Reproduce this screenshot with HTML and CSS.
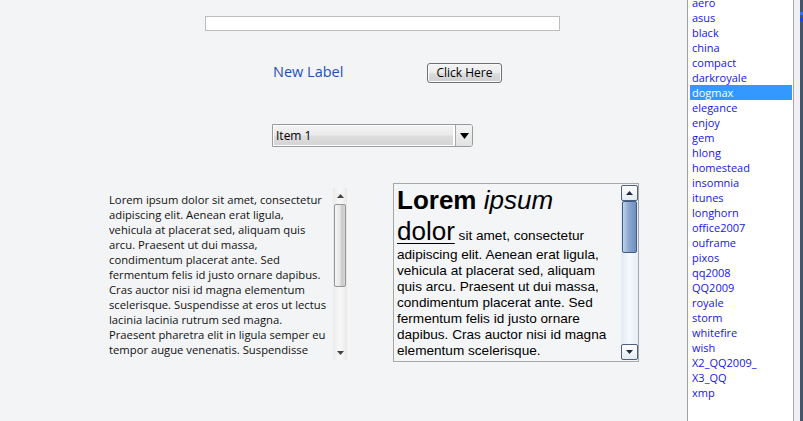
FILE: index.html
```
<!DOCTYPE html>
<html>
<head>
<meta charset="utf-8">
<link rel="stylesheet" href="styles.css">
</head>
<body>
<div class="app">
  <div class="main">
    <div class="field"></div>
    <div class="row1">
      <span class="label">New Label</span>
      <span class="btn">Click Here</span>
    </div>
    <div class="combo">
      <span class="combo-text">Item 1</span>
      <span class="combo-arrow"><svg width="9" height="6" viewBox="0 0 9 6"><path d="M0 0h9L4.5 6z" fill="#000"/></svg></span>
    </div>
    <div class="content">
      <div class="plain">
        <div class="plain-text">Lorem ipsum dolor sit amet, consectetur adipiscing elit. Aenean erat ligula, vehicula at placerat sed, aliquam quis arcu. Praesent ut dui massa, condimentum placerat ante. Sed fermentum felis id justo ornare dapibus. Cras auctor nisi id magna elementum scelerisque. Suspendisse at eros ut lectus lacinia lacinia rutrum sed magna. Praesent pharetra elit in ligula semper eu tempor augue venenatis. Suspendisse</div>
        <div class="sb1">
          <div class="sb1-up"><svg width="7" height="4" viewBox="0 0 7 4"><path d="M0 4h7L3.5 0z" fill="#444"/></svg></div>
          <div class="sb1-thumb"></div>
          <div class="sb1-track"></div>
          <div class="sb1-down"><svg width="7" height="4" viewBox="0 0 7 4"><path d="M0 0h7L3.5 4z" fill="#444"/></svg></div>
        </div>
      </div>
      <div class="rich">
        <div class="rich-text"><span class="big"><b>Lorem</b> <i>ipsum</i> <u>dolor</u></span> sit amet, consectetur adipiscing elit. Aenean erat ligula, vehicula at placerat sed, aliquam quis arcu. Praesent ut dui massa, condimentum placerat ante. Sed fermentum felis id justo ornare dapibus. Cras auctor nisi id magna elementum scelerisque.</div>
        <div class="sb2">
          <div class="sb2-btn"><svg width="7" height="4" viewBox="0 0 7 4"><path d="M0 4h7L3.5 0z" fill="#1c2c44"/></svg></div>
          <div class="sb2-thumb"></div>
          <div class="sb2-track"></div>
          <div class="sb2-btn"><svg width="7" height="4" viewBox="0 0 7 4"><path d="M0 0h7L3.5 4z" fill="#1c2c44"/></svg></div>
        </div>
      </div>
    </div>
  </div>
  <div class="side">
    <ul class="list">
      <li>aero</li><li>asus</li><li>black</li><li>china</li><li>compact</li><li>darkroyale</li><li class="sel">dogmax</li><li>elegance</li><li>enjoy</li><li>gem</li><li>hlong</li><li>homestead</li><li>insomnia</li><li>itunes</li><li>longhorn</li><li>office2007</li><li>ouframe</li><li>pixos</li><li>qq2008</li><li>QQ2009</li><li>royale</li><li>storm</li><li>whitefire</li><li>wish</li><li>X2_QQ2009_</li><li>X3_QQ</li><li>xmp</li>
    </ul>
    <div class="edge"><div class="edge-line"><span class="mark m1"></span><span class="mark m2"></span></div></div>
  </div>
</div>
</body>
</html>
```
FILE: styles.css
```
* { box-sizing: border-box; }
html, body { margin: 0; padding: 0; }
body {
  width: 803px;
  height: 421px;
  overflow: hidden;
  background: #f3f4f6;
  font-family: "Open Sans", "Noto Sans", sans-serif;
}
.app {
  display: flex;
  height: 421px;
}
.main {
  flex: 0 0 687px;
  padding-top: 16px;
  display: flex;
  flex-direction: column;
}
.field {
  margin-left: 205px;
  width: 355px;
  height: 15px;
  background: #fff;
  border: 1px solid #bdbdbd;
}
.row1 {
  margin-top: 32px;
  height: 20px;
  display: flex;
  align-items: center;
  padding-left: 273px;
}
.label {
  width: 154px;
  font-size: 14.5px;
  color: #1f50b8;
  line-height: 20px;
  padding-bottom: 2px;
}
.btn {
  width: 75px;
  height: 20px;
  border: 1px solid #707070;
  border-radius: 3px;
  background: linear-gradient(#f4f4f4 0%, #ececec 48%, #dcdcdc 52%, #cfcfcf 100%);
  box-shadow: inset 0 0 0 1px #fbfbfb;
  font-size: 12px;
  color: #000;
  display: flex;
  align-items: center;
  justify-content: center;
  line-height: 1;
}
.combo {
  margin-top: 41px;
  margin-left: 272px;
  width: 201px;
  height: 23px;
  border: 1px solid #9a9a9a;
  border-radius: 0 3px 3px 0;
  display: flex;
  background: #fff;
}
.combo-text {
  flex: 1;
  margin: 1px 0 1px 1px;
  padding-left: 2px;
  font-size: 12px;
  line-height: 19px;
  color: #000;
  background: linear-gradient(#f2f2f2 0%, #ebebeb 45%, #dddddd 55%, #d4d4d4 100%);
  border-right: 2px solid #fff;
}
.combo-arrow {
  width: 17px;
  border-left: 1px solid #a8a8a8;
  background: linear-gradient(#f4f4f4, #e2e2e2);
  border-radius: 0 2px 2px 0;
  display: flex;
  align-items: center;
  justify-content: center;
}
.content {
  margin-top: 36px;
  display: flex;
  align-items: flex-start;
}
.plain {
  margin-top: 5px;
  margin-left: 109px;
  height: 172px;
  display: flex;
}
.plain-text {
  width: 224px;
  padding-right: 5px;
  height: 172px;
  overflow: hidden;
  padding-top: 4px;
  font-size: 11.25px;
  line-height: 15px;
  color: #111;
}
.sb1 {
  width: 14px;
  height: 172px;
  display: flex;
  flex-direction: column;
  background: linear-gradient(90deg, #eaeaea, #f6f6f6 40%, #f6f6f6 60%, #e8e8e8);
}
.sb1-up, .sb1-down {
  height: 15px;
  display: flex;
  align-items: center;
  justify-content: center;
}
.sb1-thumb {
  margin: 1px 1px 0;
  height: 83px;
  border: 1px solid #959595;
  border-radius: 2px;
  background: linear-gradient(90deg, #f6f6f6, #e6e6e6 50%, #c9c9c9 70%, #d8d8d8);
}
.sb1-track { flex: 1; }
.rich {
  margin-left: 46px;
  width: 246px;
  height: 179px;
  border: 1px solid #a7a7a7;
  display: flex;
  background: #f4f5f7;
}
.rich-text {
  flex: 1;
  overflow: hidden;
  padding: 1px 6px 0 3px;
  font-family: "Liberation Sans", Arial, sans-serif;
  font-size: 13.6px;
  line-height: 16px;
  color: #000;
}
.big {
  font-size: 26px;
  line-height: 31px;
}
.big u { text-decoration-thickness: 1px; text-underline-offset: 3px; }
.sb2 {
  width: 17px;
  margin: 1px 0 1px 0;
  display: flex;
  flex-direction: column;
  background: linear-gradient(90deg, #e3e9f3, #f6f9fd 50%, #e7edf6);
}
.sb2-btn {
  height: 16px;
  border: 1px solid #4a607e;
  border-radius: 2px;
  background: linear-gradient(#ffffff, #e6ebf3);
  display: flex;
  align-items: center;
  justify-content: center;
}
.sb2-thumb {
  height: 52px;
  margin: 0 1px;
  border: 1px solid #3e5c86;
  border-radius: 2px;
  background: linear-gradient(90deg, #c4d4ea, #8fabd2 40%, #6f8fbd 100%);
}
.sb2-track { flex: 1; }
.side {
  flex: 1;
  display: flex;
}
.list {
  list-style: none;
  margin: 0;
  padding: 0 1px 0 2px;
  width: 107px;
  height: 421px;
  background: #fff;
  border-left: 1px solid #a0a0a0;
  border-right: 1px solid #a8a8a8;
  font-family: "Open Sans", "Noto Sans", sans-serif;
  font-size: 11px;
  overflow: hidden;
}
.list li {
  height: 15px;
  line-height: 15px;
  padding-left: 2px;
  color: #1515e6;
}
.list li:first-child { margin-top: -5px; }
.list li.sel {
  background: #3399ff;
  color: #fff;
}
.edge {
  flex: 1;
  background: #eef0f3;
  display: flex;
  justify-content: flex-end;
}
.edge-line {
  width: 3px;
  background: #44546a;
  position: relative;
}
.mark {
  position: absolute;
  left: 0;
  width: 3px;
  height: 3px;
  background: #3a6cf0;
}
.m1 { top: 12px; }
.m2 { top: 18px; background: #1f3fe0; }
```
